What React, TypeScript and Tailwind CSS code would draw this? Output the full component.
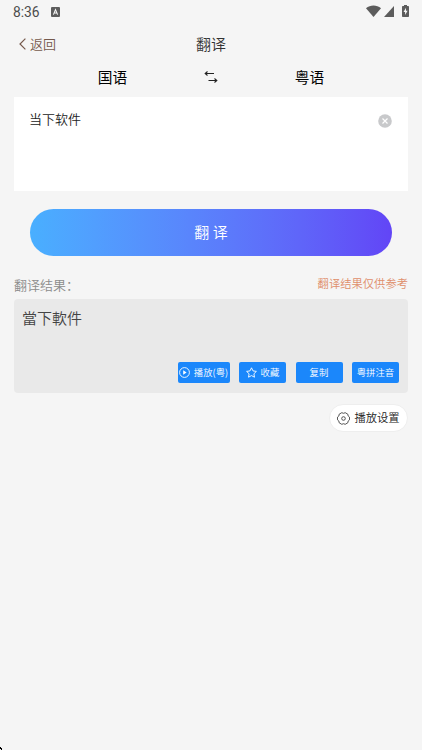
function StatusBar() {
  return (
    <div className="flex h-6 items-center justify-between pl-[13px] pr-[13px] text-[#5c5c5c]">
      <div className="flex items-center gap-[12px]">
        <span className="w-[26px] font-['Roboto',sans-serif] text-[13.8px] leading-6 font-normal text-[#4c4c4c]">8:36</span>
        <svg className="h-[10px] w-[9px]" viewBox="0 0 9 10">
          <rect width="9" height="10" rx="1" fill="currentColor" />
          <path d="M2.4 7.6 4.5 2.6 6.6 7.6M3.3 6h2.4" fill="none" stroke="#f5f5f5" strokeWidth="1.1" />
        </svg>
      </div>
      <div className="flex items-center pb-0.5">
        <svg className="h-3 w-[15px]" viewBox="0 0 15 12">
          <path d="M0 3.2C4.3-.4 10.7-.4 15 3.2L7.5 12z" fill="currentColor" />
        </svg>
        <svg className="ml-[3px] h-[11px] w-[10px]" viewBox="0 0 10 11">
          <path d="M10 0v11H0z" fill="currentColor" />
        </svg>
        <svg className="ml-2 h-3 w-[7px]" viewBox="0 0 7 12">
          <path d="M2 0h3v1h1.2q.8 0 .8.8v9.4q0 .8-.8.8H.8q-.8 0-.8-.8V1.8Q0 1 .8 1H2z" fill="currentColor" />
          <path d="M4 2.8 1.5 7h1.6v3l2.5-4.3H4z" fill="#f5f5f5" />
        </svg>
      </div>
    </div>
  );
}

function PlayIcon() {
  return (
    <svg className="h-[11px] w-[11px] shrink-0" viewBox="0 0 11 11">
      <circle cx="5.5" cy="5.5" r="4.9" fill="none" stroke="white" strokeWidth="0.9" />
      <path d="M4.2 3.2v4.6l3.4-2.3z" fill="white" />
    </svg>
  );
}

function StarIcon() {
  return (
    <svg className="h-[11px] w-[11px] shrink-0" viewBox="0 0 11 11">
      <path
        d="M5.5.8 7 3.9l3.4.5-2.5 2.4.6 3.4-3-1.6-3 1.6.6-3.4L.6 4.4 4 3.9z"
        fill="none"
        stroke="white"
        strokeWidth="0.9"
        strokeLinejoin="round"
      />
    </svg>
  );
}

function SettingsIcon() {
  return (
    <svg className="h-[13px] w-[13px] shrink-0" viewBox="0 0 13 13" fill="none" stroke="#444" strokeWidth="0.9">
      <path
        d="M4.8.7Q6.5 1.9 8.2.7L10.8 2.2Q10.6 4.2 12.5 5.1V7.9Q10.6 8.8 10.8 10.8L8.2 12.3Q6.5 11.1 4.8 12.3L2.2 10.8Q2.4 8.8.5 7.9V5.1Q2.4 4.2 2.2 2.2z"
        strokeLinejoin="round"
      />
      <circle cx="6.5" cy="6.5" r="1.8" />
    </svg>
  );
}

const actionClass =
  "flex h-[21px] items-center justify-center rounded-[2px] bg-[#1b87fb] text-[9.4px] leading-none whitespace-nowrap text-white";

export default function App() {
  return (
    <div className="relative h-[750px] w-[422px] overflow-hidden bg-[#f5f5f5] font-['Noto_Sans_CJK_SC',sans-serif] font-[350]">
      <StatusBar />

      <header className="grid h-10 grid-cols-3 items-center px-[19px] pb-0.5">
        <button className="flex items-center gap-1 text-[13px] leading-none text-[#75594c]">
          <svg className="mt-px h-[12px] w-[7px]" viewBox="0 0 7 12" fill="none" stroke="currentColor" strokeWidth="1.2">
            <path d="M6.4.6 1 6l5.4 5.4" />
          </svg>
          返回
        </button>
        <h1 className="text-center text-[15px] leading-none text-[#333]">翻译</h1>
      </header>

      <div className="grid h-[33px] grid-cols-[197px_28px_197px] items-center pb-[7px] text-center text-[14.7px] leading-none font-normal text-black">
        <span className="pl-7">国语</span>
        <svg className="mx-auto h-[12px] w-[14px]" viewBox="0 0 14 12" fill="none" stroke="#222" strokeWidth="1.1">
          <path d="M10 2.5H1.2M3.5.5l-2.3 2 2.3 2M4.5 9.5h8.3M10.5 7.5l2.3 2-2.3 2" />
        </svg>
        <span className="pr-7">粤语</span>
      </div>

      <main className="px-[14px]">
        <section className="flex h-[94px] items-start justify-between bg-white px-[15px] pt-[15px]">
          <p className="text-[13px] leading-[14px] text-[#222]">当下软件</p>
          <svg className="mt-[2px] mr-px h-[14px] w-[14px]" viewBox="0 0 14 14">
            <circle cx="7" cy="7" r="6.8" fill="#c8c9cb" />
            <path d="m4.5 4.5 5 5m0-5-5 5" stroke="white" strokeWidth="1.2" />
          </svg>
        </section>

        <button className="mx-4 mt-[18px] flex h-[47px] w-[362px] items-center justify-center rounded-full bg-linear-to-r from-[#49afff] to-[#6245f6] pb-0.5 text-[15px] leading-none text-white">
          翻 译
        </button>

        <div className="mt-[18px] flex h-[25px] justify-between">
          <h2 className="pt-[2px] text-[13px] leading-[18px] text-[#8c8c8c]">翻译结果：</h2>
          <span className="text-[11.3px] leading-[18px] text-[#df8e6b]">翻译结果仅供参考</span>
        </div>

        <section className="flex h-[94px] flex-col justify-between rounded-[4px] bg-[#e9e9e9] pt-[10px] pr-[9px] pb-[10px] pl-2">
          <p className="text-[15px] leading-[17px] text-[#444]">當下軟件</p>
          <div className="flex justify-end gap-[9.5px]">
            <button className={`${actionClass} w-[52px] gap-1`}>
              <PlayIcon />
              播放(粤)
            </button>
            <button className={`${actionClass} w-[47px] gap-1`}>
              <StarIcon />
              收藏
            </button>
            <button className={`${actionClass} w-[47px]`}>复制</button>
            <button className={`${actionClass} w-[47px]`}>粤拼注音</button>
          </div>
        </section>

        <div className="mt-[11px] flex justify-end">
          <button className="flex h-7 w-[79px] items-center justify-center gap-1 rounded-full border border-[#eeeeee] bg-white text-[11.3px] leading-none text-[#222]">
            <SettingsIcon />
            播放设置
          </button>
        </div>
      </main>

      <svg className="absolute bottom-0 left-0 h-[4px] w-[3px]" viewBox="0 0 3 4">
        <path d="M0 1h1v1h1v2H1V3H0z" fill="black" />
      </svg>
    </div>
  );
}
